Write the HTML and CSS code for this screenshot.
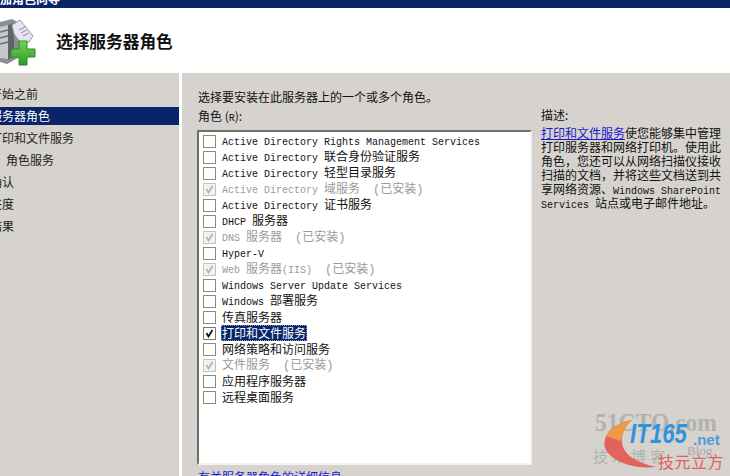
FILE: index.html
```html
<!DOCTYPE html>
<html lang="zh-CN">
<head>
<meta charset="utf-8">
<title>添加角色向导</title>
<link rel="stylesheet" href="styles.css">
</head>
<body>
<div class="wizard">
  <div class="titlebar"><span class="title-text">添加角色向导</span></div>
  <header class="banner">
    <svg class="banner-icon" width="40" height="50" viewBox="0 0 40 50" aria-hidden="true">
      <defs>
        <linearGradient id="plusGreen" x1="0" y1="0" x2="0" y2="1">
          <stop offset="0" stop-color="#72d84e"/>
          <stop offset="1" stop-color="#2a9a2c"/>
        </linearGradient>
      </defs>
      <path d="M0 4 L12 1 L25 8 V36 L7 46 L0 44 Z" fill="#8b8e90"/>
      <path d="M0 9 L8 7 V41 L0 40 Z" fill="#c6c8c9"/>
      <path d="M0 14 L8 12 M0 20 L8 18 M0 26 L8 24" stroke="#6e7274" stroke-width="1.500"/>
      <path d="M8 7 L14 5 V38 L8 42 Z" fill="#5f6366"/>
      <path d="M12 7 L20 2 L33 18 L29 24 L20 24 L14 16 Z" fill="#e2e8f0" stroke="#8f9cab"/>
      <path d="M19 12 L25 9 M21 15 L27 12 M23 18 L29 15" stroke="#c48ab4" stroke-width="1.300"/>
      <path d="M19 23 H27 V31 H35 V39 H27 V47 H19 V39 H11 V31 H19 Z" fill="url(#plusGreen)" stroke="#2d8a2b"/>
    </svg>
    <h1 class="banner-title">选择服务器角色</h1>
  </header>
  <div class="body">
    <nav class="nav">
      <div class="nav-item">开始之前</div>
      <div class="nav-item nav-current">服务器角色</div>
      <div class="nav-item">打印和文件服务</div>
      <div class="nav-item nav-sub">角色服务</div>
      <div class="nav-item">确认</div>
      <div class="nav-item">进度</div>
      <div class="nav-item">结果</div>
    </nav>
    <main class="content">
      <p class="intro">选择要安装在此服务器上的一个或多个角色。</p>
      <div class="columns">
        <section class="roles">
          <div class="roles-label">角色 (<span class="mono">R</span>):</div>
          <div class="listbox">
            <label class="row"><span class="box"></span><span><span class="mono">Active Directory Rights Management Services</span></span></label>
            <label class="row"><span class="box"></span><span><span class="mono">Active Directory </span>联合身份验证服务</span></label>
            <label class="row"><span class="box"></span><span><span class="mono">Active Directory </span>轻型目录服务</span></label>
            <label class="row row-off"><span class="box box-on"><svg viewBox="0 0 11 11" class="tick"><path d="M2.500 5 L4.500 8.500 L8.500 2" /></svg></span><span><span class="mono">Active Directory </span>域服务<span class="state">(已安装)</span></span></label>
            <label class="row"><span class="box"></span><span><span class="mono">Active Directory </span>证书服务</span></label>
            <label class="row"><span class="box"></span><span><span class="mono">DHCP </span>服务器</span></label>
            <label class="row row-off"><span class="box box-on"><svg viewBox="0 0 11 11" class="tick"><path d="M2.500 5 L4.500 8.500 L8.500 2" /></svg></span><span><span class="mono">DNS </span>服务器<span class="state">(已安装)</span></span></label>
            <label class="row"><span class="box"></span><span><span class="mono">Hyper-V</span></span></label>
            <label class="row row-off"><span class="box box-on"><svg viewBox="0 0 11 11" class="tick"><path d="M2.500 5 L4.500 8.500 L8.500 2" /></svg></span><span><span class="mono">Web </span>服务器<span class="mono">(IIS)</span><span class="state">(已安装)</span></span></label>
            <label class="row"><span class="box"></span><span><span class="mono">Windows Server Update Services</span></span></label>
            <label class="row"><span class="box"></span><span><span class="mono">Windows </span>部署服务</span></label>
            <label class="row"><span class="box"></span><span>传真服务器</span></label>
            <label class="row row-checked"><span class="box box-on"><svg viewBox="0 0 11 11" class="tick"><path d="M2.500 5 L4.500 8.500 L8.500 2" /></svg></span><span class="selected">打印和文件服务</span></label>
            <label class="row"><span class="box"></span><span>网络策略和访问服务</span></label>
            <label class="row row-off"><span class="box box-on"><svg viewBox="0 0 11 11" class="tick"><path d="M2.500 5 L4.500 8.500 L8.500 2" /></svg></span><span>文件服务<span class="state">(已安装)</span></span></label>
            <label class="row"><span class="box"></span><span>应用程序服务器</span></label>
            <label class="row"><span class="box"></span><span>远程桌面服务</span></label>
          </div>
          <a class="more" href="#">有关服务器角色的详细信息</a>
        </section>
        <aside class="desc">
          <div class="desc-label">描述:</div>
          <p class="desc-text"><a href="#">打印和文件服务</a>使您能够集中管理打印服务器和网络打印机。使用此角色，您还可以从网络扫描仪接收扫描的文档，并将这些文档送到共享网络资源、<span class="mono-wrap">Windows SharePoint Services </span>站点或电子邮件地址。</p>
        </aside>
      </div>
    </main>
  </div>
  <div class="watermark" aria-hidden="true">
    <svg width="140" height="71" viewBox="0 0 140 71">
      <text x="5" y="26" class="wm-51" textLength="122" lengthAdjust="spacingAndGlyphs">51CTO.com</text>
      <text x="3" y="57" class="wm-blog">技术博客</text>
      <text x="97" y="50" class="wm-blog2">Blog</text>
      <path d="M42 15 C20 18 8 36 18 48 C28 60 50 64 66 62 C50 58 34 52 32 38 C31 28 36 20 42 15 Z" fill="#e2625c"/>
      <path d="M42 15 C30 17 21 23 16 31 L31 36 C32 28 36 20 42 15 Z" fill="#ee9a45"/>
      <text x="40" y="38" class="wm-it" textLength="57" lengthAdjust="spacingAndGlyphs">IT165</text>
      <text x="103" y="40" class="wm-net">.net</text>
      <text x="68" y="63" class="wm-red">技元立方</text>
    </svg>
  </div>
</div>
</body>
</html>
```

FILE: styles.css
```css
html, body {
  margin: 0;
  padding: 0;
  background: #d6d3ce;
}
.wizard {
  position: relative;
  width: 730px;
  height: 476px;
  overflow: hidden;
  display: flex;
  flex-direction: column;
  font-family: "Noto Sans CJK SC", sans-serif;
  font-size: 12px;
  color: #111;
  background: #d6d3ce;
}
.mono {
  font-family: "Liberation Mono", "Noto Sans CJK SC", monospace;
  font-size: 10px;
  white-space: pre;
}
.mono-wrap {
  font-family: "Liberation Mono", "Noto Sans CJK SC", monospace;
  font-size: 10px;
  line-height: 0;
}
.titlebar {
  height: 8px;
  flex: none;
  background: #0a246a;
  overflow: hidden;
}
.title-text {
  display: block;
  margin: -8px 0 0 -12px;
  color: #fff;
  font-weight: 700;
  font-size: 12px;
  line-height: 14px;
  white-space: nowrap;
}
.banner {
  height: 65px;
  flex: none;
  background: #fff;
  display: flex;
  align-items: flex-start;
  overflow: hidden;
}
.banner-icon {
  flex: none;
  margin-top: 10px;
}
.banner-title {
  align-self: center;
  margin: 0 0 0 16px;
  font-size: 16.700px;
  font-weight: 700;
  line-height: 22px;
  color: #111;
}
.body {
  flex: 1;
  display: flex;
  min-height: 0;
}
.nav {
  width: 179px;
  flex: none;
  padding-top: 10px;
  border-right: 3px solid #fff;
  overflow: hidden;
}
.nav-item {
  height: 22px;
  line-height: 22px;
  text-indent: -10px;
  white-space: nowrap;
  color: #222;
}
.nav-current {
  height: 18px;
  line-height: 18px;
  margin: 2px 0;
  background: #0a246a;
  color: #fff;
}
.nav-sub { text-indent: 6px; }
.content {
  flex: 1;
  min-width: 0;
  padding: 16px 0 0 15px;
}
.intro {
  margin: 0 0 0 1px;
  line-height: 16px;
}
.columns {
  display: flex;
  margin-top: 3px;
}
.roles {
  width: 344px;
  flex: none;
}
.roles-label {
  line-height: 16px;
  margin-left: 1px;
}
.listbox {
  width: 335px;
  height: 335px;
  box-sizing: border-box;
  margin-top: 3px;
  padding-top: 1px;
  background: #fff;
  border: 2px solid;
  border-color: #6f6d68 #f4f3f0 #f4f3f0 #6f6d68;
}
.row {
  height: 16px;
  display: flex;
  align-items: center;
  gap: 6px;
  padding-left: 4px;
  white-space: nowrap;
  line-height: 16px;
}
.box {
  width: 11px;
  height: 11px;
  flex: none;
  background: #fff;
  border: 1px solid #8a8a86;
  display: block;
}
.box-on { border-color: #777; }
.tick {
  display: block;
  width: 11px;
  height: 11px;
  fill: none;
  stroke: #111;
  stroke-width: 1.800;
}
.row-off { color: #9a9a9a; }
.row-off .box { border-color: #c4c4c2; background: #f2f2f0; }
.row-off .tick { stroke: #b4b4b4; }
.state {
  margin-left: 13px;
  font-family: "Liberation Mono", "Noto Sans CJK SC", monospace;
}
.selected {
  background: #0a246a;
  color: #fff;
  margin-left: -1px;
  padding: 0 1px;
  line-height: 16px;
  outline: 1px dotted #8a94b4;
  outline-offset: -1px;
}
.more {
  display: block;
  margin: 4px 0 0 1px;
  color: #1a1acc;
  text-decoration: underline;
  line-height: 16px;
}
.desc {
  width: 183px;
  flex: none;
  margin-top: -1px;
}
.desc-label {
  line-height: 16px;
}
.desc-text {
  margin: 3px 0 0 0;
  line-height: 14px;
  color: #111;
}
.desc-text a { color: #1a1acc; text-decoration: underline; }
.watermark {
  position: absolute;
  left: 590px;
  top: 405px;
}
.wm-51 { font: 700 26px "Liberation Serif", serif; fill: #b2b1ab; }
.wm-it { font: italic 700 27px "Liberation Sans", sans-serif; fill: #2f93e0; }
.wm-net { font: 700 15px "Liberation Sans", sans-serif; fill: #4f9cd6; }
.wm-blog { font: 15px "Noto Sans CJK SC", sans-serif; fill: #b2b1ab; letter-spacing: 4px; }
.wm-blog2 { font: 13px "Liberation Serif", serif; fill: #a9a8a2; }
.wm-red { font: 16px "Noto Sans CJK SC", sans-serif; fill: #e0605c; letter-spacing: .5px; }
```
